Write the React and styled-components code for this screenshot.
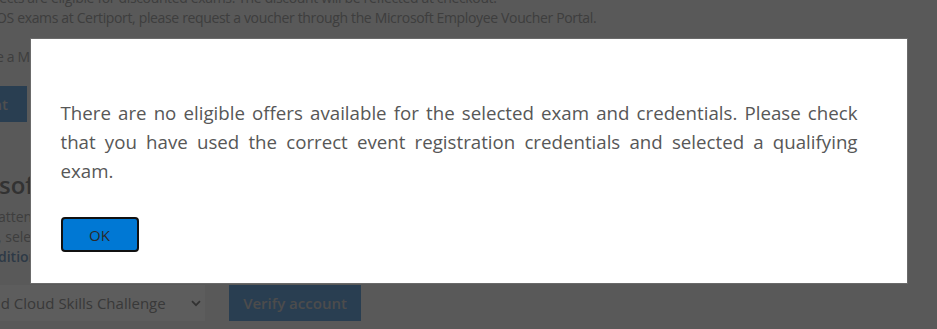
import React from 'react';
import styled, { createGlobalStyle } from 'styled-components';

const GlobalStyle = createGlobalStyle`
  html, body {
    margin: 0;
    padding: 0;
    background: #f4f4f4;
    overflow: hidden;
  }
  * {
    box-sizing: border-box;
  }
`;

const Page = styled.div`
  width: 937px;
  height: 329px;
  overflow: hidden;
  font-family: 'Open Sans', 'Noto Sans', sans-serif;
  color: #a9a9a9;
  display: flex;
  flex-direction: column;
`;

const Para = styled.p`
  margin: ${({ top }) => top || '0'} 0 0 -4px;
  font-size: 14px;
  line-height: 20px;
  white-space: nowrap;
  letter-spacing: -0.35px;
`;

const ButtonSlot = styled.div`
  width: 27px;
  margin-top: 19px;
  display: flex;
  justify-content: flex-end;
`;

const CutButton = styled.button`
  flex: none;
  height: 36px;
  padding: 0 19px;
  border: none;
  background: #72a9df;
  color: #d8d8d8;
  font-family: inherit;
  font-size: 15px;
  font-weight: 600;
  white-space: nowrap;
`;

const Heading = styled.h2`
  margin: 47px 0 0 -1px;
  font-size: 24px;
  line-height: 32px;
  font-weight: 600;
  color: #8a8a8a;
  white-space: nowrap;
`;

const Body = styled.div`
  margin: 6px 0 0 -2px;
  font-size: 14px;
  line-height: 20px;
  white-space: nowrap;
`;

const LinkText = styled.span`
  font-weight: 600;
  color: #7c9cc0;
`;

const Controls = styled.div`
  display: flex;
  align-items: center;
  gap: 24px;
  margin-top: 18px;
`;

const Select = styled.div`
  width: 208px;
  height: 36px;
  display: flex;
  align-items: center;
  justify-content: space-between;
  padding: 0 4px 0 0;
  margin-left: -3px;
  background: #fff;
  font-size: 15px;
  color: #9c9c9c;
  white-space: nowrap;
`;

const Chevron = styled.svg`
  width: 10px;
  height: 7px;
  flex: none;
`;

const VerifyButton = styled.button`
  width: 132px;
  height: 36px;
  border: none;
  background: #72a9df;
  color: #d0d0d0;
  font-family: inherit;
  font-size: 15px;
  font-weight: 600;
`;

const Overlay = styled.div`
  position: fixed;
  inset: 0;
  background: rgba(0, 0, 0, 0.635);
  display: flex;
  justify-content: center;
  align-items: flex-start;
  padding-top: 38px;
`;

const Dialog = styled.div`
  width: 878px;
  height: 246px;
  background: #fff;
  border: 1px solid #6a6a6a;
  padding: 59px 49px 0 30px;
  font-family: 'Open Sans', 'Noto Sans', sans-serif;
`;

const Message = styled.p`
  margin: 0;
  font-size: 18.7px;
  line-height: 29px;
  color: #575757;
  text-align: justify;
`;

const OkButton = styled.button`
  margin-top: 32px;
  width: 78px;
  height: 35px;
  background: #0078d4;
  border: 2px solid #111;
  border-radius: 4px;
  color: #2a2a2a;
  font-family: inherit;
  font-size: 15px;
`;

export default function App() {
  return (
    <>
      <GlobalStyle />
      <Page>
        <Para top="-12px">
          jects are eligible for discounted exams. The discount will be reflected at checkout.
          <br />
          OS exams at Certiport, please request a voucher through the Microsoft Employee Voucher Portal.
        </Para>
        <Para top="19px">e a Microsoft Learn profile to continue.</Para>
        <ButtonSlot>
          <CutButton>Create account</CutButton>
        </ButtonSlot>
        <Heading>soft event offers</Heading>
        <Body>
          attended a qualifying Microsoft event, you may be eligible for an offer.
          <br />
          , select the event below and verify your account.
          <br />
          <LinkText>ditions</LinkText>
        </Body>
        <Controls>
          <Select>
            ld Cloud Skills Challenge
            <Chevron viewBox="0 0 10 7">
              <path d="M1 1.2 L5 5.2 L9 1.2" fill="none" stroke="#8a8a8a" strokeWidth="1.8" />
            </Chevron>
          </Select>
          <VerifyButton>Verify account</VerifyButton>
        </Controls>
      </Page>
      <Overlay>
        <Dialog role="dialog">
          <Message>
            There are no eligible offers available for the selected exam and credentials. Please check
            that you have used the correct event registration credentials and selected a qualifying
            exam.
          </Message>
          <OkButton>OK</OkButton>
        </Dialog>
      </Overlay>
    </>
  );
}
